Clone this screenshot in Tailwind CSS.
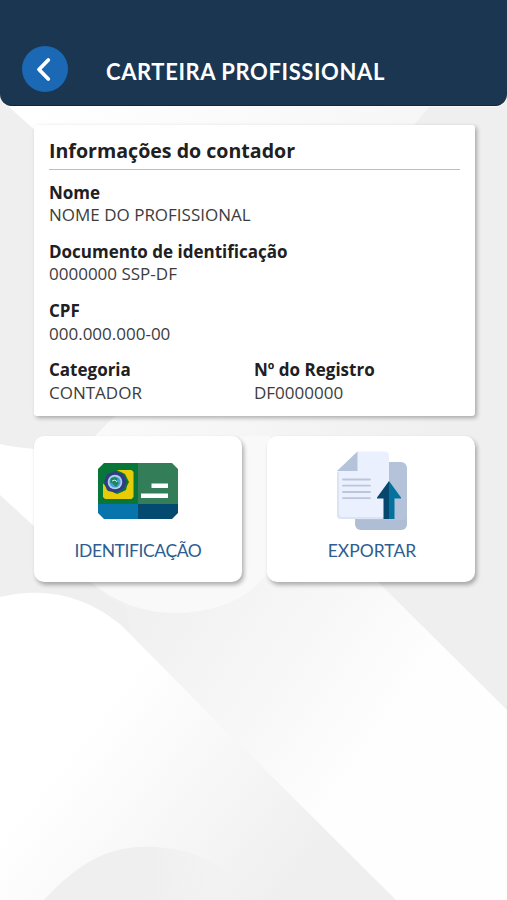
<!DOCTYPE html>
<html lang="pt-BR">
<head>
    <meta charset="UTF-8">
    <meta name="viewport" content="width=device-width, initial-scale=1.0">
    <title>Carteira Profissional</title>
    <script src="https://cdn.jsdelivr.net/npm/@tailwindcss/browser@4"></script>
</head>

<body class="relative h-[900px] overflow-hidden bg-[#efefef] font-['Open_Sans',sans-serif] text-[#202022]">

    <!-- Background shapes -->
    <svg class="absolute inset-0" width="507" height="900" viewBox="0 0 507 900" aria-hidden="true">
        <defs>
            <linearGradient id="top" gradientUnits="userSpaceOnUse" x1="30" y1="0" x2="440" y2="0">
                <stop offset="0" stop-color="#ffffff"/>
                <stop offset="1" stop-color="#f6f6f6"/>
            </linearGradient>
            <linearGradient id="mid" gradientUnits="userSpaceOnUse" x1="150" y1="620" x2="400" y2="790">
                <stop offset="0" stop-color="#f1f1f1"/>
                <stop offset=".5" stop-color="#f8f8f8"/>
                <stop offset=".85" stop-color="#fefefe"/>
            </linearGradient>
            <linearGradient id="left" gradientUnits="userSpaceOnUse" x1="120" y1="690" x2="320" y2="850">
                <stop offset="0" stop-color="#ffffff"/>
                <stop offset="1" stop-color="#efefef"/>
            </linearGradient>
            <linearGradient id="hill" gradientUnits="userSpaceOnUse" x1="150" y1="0" x2="235" y2="0">
                <stop offset="0" stop-color="#efefef"/>
                <stop offset="1" stop-color="#efefef" stop-opacity="0"/>
            </linearGradient>
            <linearGradient id="band" gradientUnits="userSpaceOnUse" x1="90" y1="0" x2="430" y2="0">
                <stop offset="0" stop-color="#fafafa"/>
                <stop offset="1" stop-color="#f0f0f0"/>
            </linearGradient>
        </defs>
        <path d="M8 106L48 142H400L430 106Z" fill="url(#top)"/>
        <path d="M95 436Q108 422 122 410H440V440H95Z" fill="url(#band)"/>
        <path d="M0 444Q20 449 60 450V550L0 495Z" fill="#ffffff"/>
        <path d="M60 570H366L384 588L507 710V900H395L105 610Z" fill="url(#mid)"/>
        <path d="M240 436H270V570Q240 613 172 613Q127 612 91 582L80 560H240Z" fill="#f9f9f9"/>
        <path d="M30 560H76L91 582Q107 600 125 606L130 630L30 600Z" fill="#efefef"/>
        <path d="M0 597Q68 581 121 625L230 735L396 900H0Z" fill="url(#left)"/>
        <path d="M44 900C85 855 120 842 165 848C205 852 230 872 262 900Z" fill="url(#hill)"/>
    </svg>

    <header class="relative flex h-[106px] items-end rounded-b-xl border-b border-[#10263b] bg-[#1a3651] pb-[13px] pl-[22px] ring-1 ring-white/60">
        <button class="flex size-[46px] items-center justify-center rounded-full bg-[#1b68b5]" aria-label="Voltar">
            <svg width="46" height="46" viewBox="0 0 46 46" fill="none" stroke="#fff" stroke-width="3.800" stroke-linecap="round" stroke-linejoin="round">
                <path d="M26.300 14L17 23.500L26.300 33"/>
            </svg>
        </button>
        <h1 class="ml-[38px] pb-[5px] font-['Lato',sans-serif] text-[22px] leading-[30px] font-bold tracking-[0.6px] whitespace-nowrap text-white">CARTEIRA PROFISSIONAL</h1>
    </header>

    <main class="relative pt-[19px] pr-8 pl-[34px]">
        <section class="h-[291px] rounded-[3px] bg-white px-[15px] shadow-[2px_2px_4px_rgba(0,0,0,0.3)]">
            <h2 class="h-[45px] border-b border-[#bdbdbd] pt-[11px] text-[19.6px] leading-[30px] font-bold"><span>Informações do contador</span></h2>
            <dl class="grid grid-cols-[205px_1fr] gap-y-[14px] pt-[12px] text-[17px] leading-[22px]">
                <div class="col-span-2 h-[45px]">
                    <dt class="font-bold"><span>Nome</span></dt>
                    <dd class="text-[#3c3c3c]"><span>NOME DO PROFISSIONAL</span></dd>
                </div>
                <div class="col-span-2 h-[45px]">
                    <dt class="font-bold"><span>Documento de identificação</span></dt>
                    <dd class="text-[#3c3c3c]"><span>0000000 SSP-DF</span></dd>
                </div>
                <div class="col-span-2 h-[45px]">
                    <dt class="font-bold"><span>CPF</span></dt>
                    <dd class="pt-px text-[#3c3c3c]"><span>000.000.000-00</span></dd>
                </div>
                <div>
                    <dt class="font-bold"><span>Categoria</span></dt>
                    <dd class="pt-px text-[#3c3c3c]"><span>CONTADOR</span></dd>
                </div>
                <div>
                    <dt class="font-bold"><span>Nº do Registro</span></dt>
                    <dd class="pt-px text-[#3c3c3c]"><span>DF0000000</span></dd>
                </div>
            </dl>
        </section>

        <div class="mt-5 grid grid-cols-2 gap-[25px] font-['Lato',sans-serif] text-[17.500px] text-[#2f5d90]">
            <a href="#" class="flex h-[146px] flex-col items-center rounded-[10px] bg-white shadow-[2px_3px_4px_rgba(0,0,0,0.3)]">
                <!-- ID card -->
                <svg class="mt-[27px]" width="80" height="57" viewBox="0 0 80 57">
                    <defs>
                        <clipPath id="card"><path d="M6 0H74L80 6V50L74 56H6L0 50V6Z"/></clipPath>
                    </defs>
                    <g clip-path="url(#card)">
                        <rect width="40" height="42" fill="#087638"/>
                        <rect x="40" width="40" height="42" fill="#347d59"/>
                        <rect y="41" width="40" height="16" fill="#0874ac"/>
                        <rect x="40" y="41" width="40" height="16" fill="#044a70"/>
                    </g>
                    <path d="M20 7H33.500L35.500 9V34L33.500 36H7L5 34V21Z" fill="#e8cc08"/>
                    <path d="M18 7L23 9L27 11L29 15L31 19L29 23L28 27L24 29L19 31L15 29L10 28L8 24L5 20V11L10 7Z" fill="#087638"/>
                    <path d="M17 8L21 10L25 11L27 15L28.500 19L27 23L25 27L21 28L17 30L13 28L9 27L7.500 23L6 19L7.500 15L9 11L13 10Z" fill="#343b84"/>
                    <circle cx="17" cy="19" r="7.300" fill="#a9d6ee"/>
                    <circle cx="17" cy="19" r="5.600" fill="#4b9fd0"/>
                    <path d="M13 15L17 14L20 16L18 18L21 20L18 24L15 21L12 19Z" fill="#20865b"/>
                    <path d="M14 18L17 17L19 19" fill="none" stroke="#c1e9ec" stroke-width="1"/>
                    <path d="M53.500 20.500H70V25H53.500ZM43 30.500H70V35H43Z" fill="#fff"/>
                </svg>
                <span class="mt-[19px] leading-6 tracking-[-0.4px]">IDENTIFICAÇÃO</span>
            </a>
            <a href="#" class="flex h-[146px] flex-col items-center rounded-[10px] bg-white shadow-[2px_3px_4px_rgba(0,0,0,0.3)]">
                <!-- Export documents -->
                <svg class="mt-[15px] ml-[2px]" width="70" height="80" viewBox="0 0 70 80">
                    <rect x="18" y="11" width="52" height="68" rx="6" fill="#b5c3da"/>
                    <path d="M20 69H67Q69 69 70 67V73Q70 79 64 79H24Q18 79 18 72Z" fill="#a4b3cc" opacity=".35"/>
                    <path d="M20.500 .5H47Q52 .5 52 5.500V68H4Q0 68 0 64V20Z" fill="#eaf0fe"/>
                    <path d="M0 62V64Q0 68 4 68H52V66H5Q2 66 2 62V21H0Z" fill="#dbe4f5"/>
                    <path d="M20.500 .5V20H0Z" fill="#b5c3da"/>
                    <path d="M6 28.500H33M6 34.700H33M6 41H33M6 47.200H33" stroke="#bbc6da" stroke-width="1.800" stroke-linecap="round"/>
                    <path d="M52 30L64 46.500V47.500H57.500V68H52Z" fill="#03739d"/>
                    <path d="M52 30L40 46.500V47.500H46.500V68H52Z" fill="#07466d"/>
                </svg>
                <span class="mt-[8px] ml-[2px] leading-6">EXPORTAR</span>
            </a>
        </div>
    </main>
</body>
</html>
